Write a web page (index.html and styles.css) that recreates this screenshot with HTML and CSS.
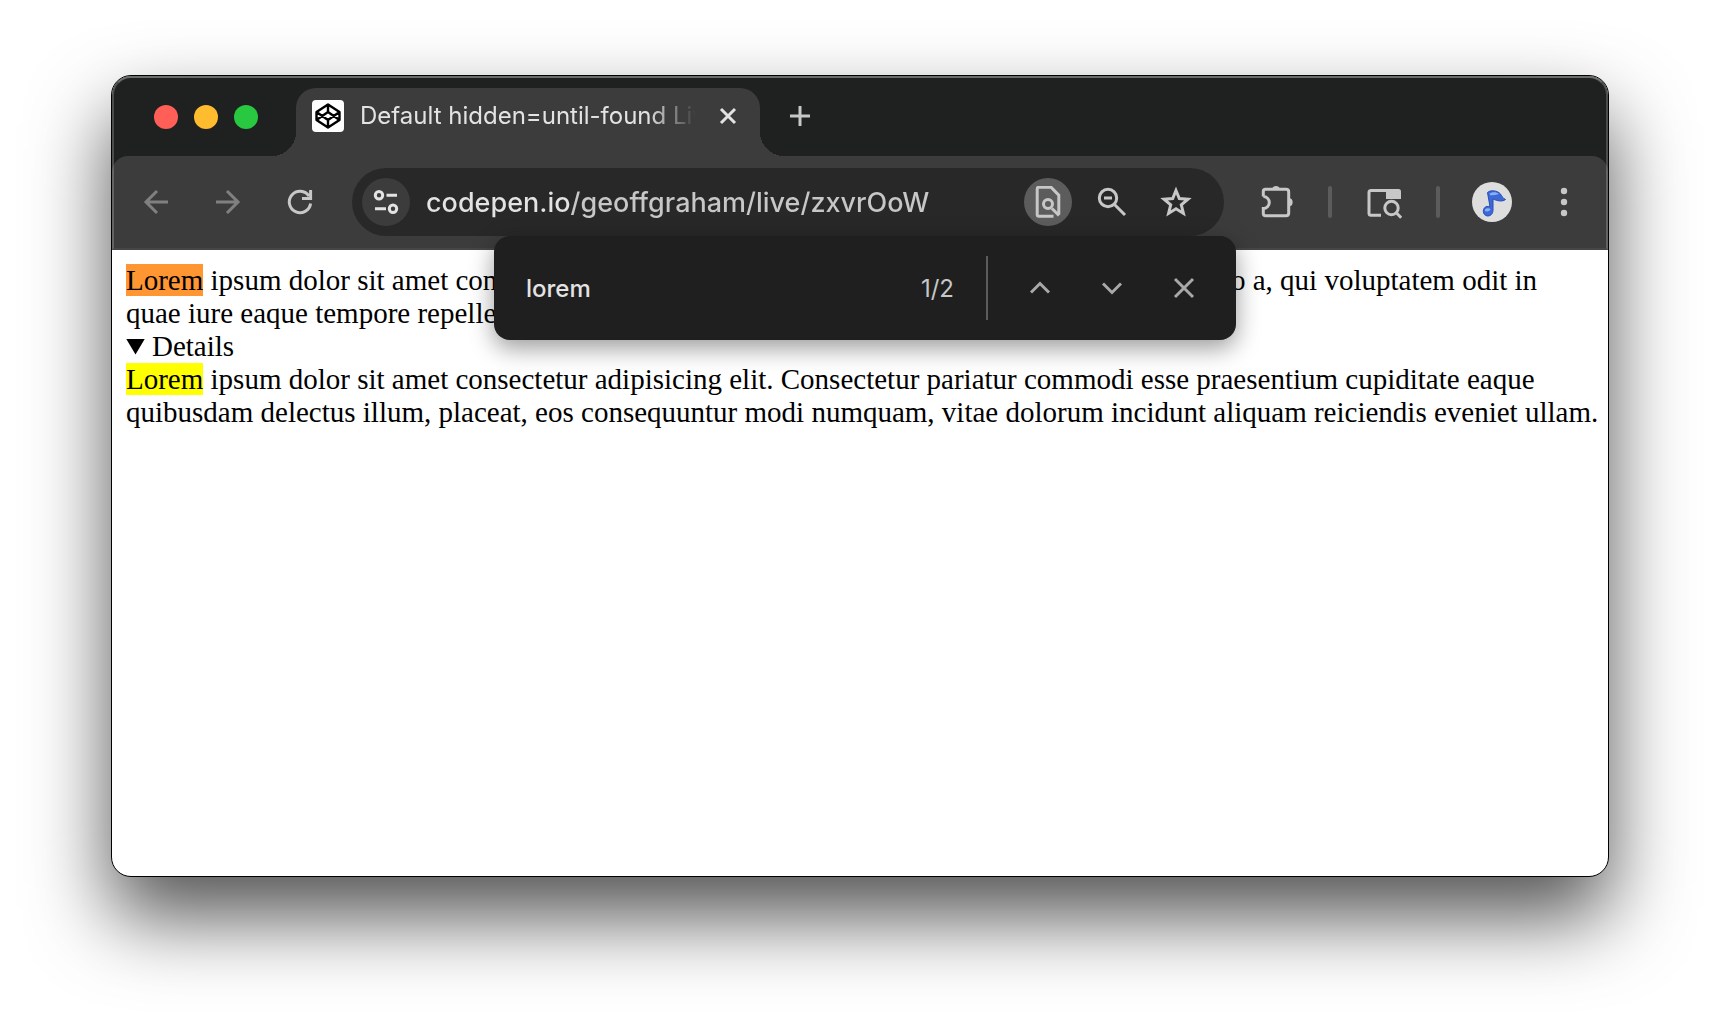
FILE: index.html
```html
<!DOCTYPE html>
<html lang="en">
<head>
<meta charset="utf-8">
<title>Default hidden=until-found Live</title>
<link rel="stylesheet" href="styles.css">
</head>
<body>
<div class="window">
  <header class="chrome">
    <div class="tab-strip">
      <div class="lights">
        <button class="light light-close" aria-label="Close window"></button>
        <button class="light light-min" aria-label="Minimize window"></button>
        <button class="light light-max" aria-label="Zoom window"></button>
      </div>
      <div class="tab">
        <svg class="favicon" viewBox="0 0 32 32" aria-hidden="true">
          <rect width="32" height="32" rx="4" fill="#fff" stroke="none"/>
          <path d="M16 4.500 27.500 12v8L16 27.500 4.500 20v-8zM16 4.500V12M16 20v7.500M4.500 12 16 20l11.500-8M4.500 20 16 12l11.500 8" fill="none" stroke="#000" stroke-width="2.400" stroke-linejoin="round"/>
        </svg>
        <span class="tab-title">Default hidden=until-found Live</span>
        <button class="tab-close" aria-label="Close tab">
          <svg width="24" height="24" viewBox="0 0 24 24"><path d="m5 5 14 14M19 5 5 19"/></svg>
        </button>
      </div>
      <button class="new-tab" aria-label="New tab">
        <svg width="24" height="24" viewBox="0 0 24 24"><path d="M12 2v20M2 12h20"/></svg>
      </button>
    </div>
    <div class="toolbar">
      <nav class="nav">
        <button class="tool dim" aria-label="Back">
          <svg width="32" height="32" viewBox="0 0 32 32"><path d="M28 16H6M17 5 6 16l11 11"/></svg>
        </button>
        <button class="tool dim" aria-label="Forward">
          <svg width="32" height="32" viewBox="0 0 32 32"><path d="M4 16h22M15 5l11 11-11 11"/></svg>
        </button>
        <button class="tool" aria-label="Reload">
          <svg width="32" height="32" viewBox="0 0 32 32"><path d="M26.600 17.500A10.700 10.700 0 1 1 25 10.200M26.600 4v8.600H18"/></svg>
        </button>
      </nav>
      <div class="omnibox">
        <button class="round site" aria-label="Site information">
          <svg width="32" height="32" viewBox="0 0 32 32"><circle cx="9" cy="9.300" r="3.700"/><path d="M16.500 9.300H27M5 22.700h11"/><circle cx="23" cy="22.700" r="3.700"/></svg>
        </button>
        <input class="url" type="text" aria-label="Address" value="codepen.io/geoffgraham/live/zxvrOoW">
        <div class="actions">
          <button class="round active" aria-label="Find in page">
            <svg width="32" height="32" viewBox="0 0 32 32"><path d="M21.500 30.200H7Q5.200 30.200 5.200 28.400V3Q5.200 1.200 7 1.200h12l7.800 8V28.500M20 22.500l7 7" /><circle cx="16" cy="18" r="4.500"/></svg>
          </button>
          <button class="round" aria-label="Zoom">
            <svg width="32" height="32" viewBox="0 0 32 32"><circle cx="12" cy="12" r="8.700"/><path d="m18.500 18.500 10.500 10.500M8 12h8"/></svg>
          </button>
          <button class="round" aria-label="Bookmark this tab">
            <svg width="32" height="32" viewBox="0 0 32 32"><path d="m16 4.500 3.300 8 8.700.700-6.700 5.700 2.100 8.500L16 22.800l-7.400 4.600 2.100-8.500L4 13.200l8.700-.700z"/></svg>
          </button>
        </div>
      </div>
      <div class="tools">
        <button class="tool" aria-label="Extensions">
          <svg width="36" height="36" viewBox="0 0 36 36"><path d="M5.300 12.500V7.500Q5.300 5.300 7.500 5.300H28Q30.700 5.300 30.700 8V29Q30.700 31.700 28 31.700H7.500Q5.300 31.700 5.300 29.500V24.500a6 6 0 0 0 0-12"/><path class="solid" d="M14 5a4.200 4.200 0 0 1 8 0zM31 14a4.300 4.300 0 0 1 0 8.500z"/></svg>
        </button>
        <span class="rule"></span>
        <button class="tool" aria-label="Search tabs">
          <svg width="36" height="36" viewBox="0 0 36 36"><path d="M15 31.200H5Q3 31.200 3 29.200V8.500Q3 6.500 5 6.500H33"/><path class="solid" d="M20 5h12.500Q35 5 35 7.500V15H20z"/><circle cx="25.500" cy="24" r="6.700"/><path d="m30 28.500 5.200 5.200"/></svg>
        </button>
        <span class="rule"></span>
        <button class="avatar" aria-label="Profile">
          <svg width="40" height="40" viewBox="0 0 40 40"><path class="note" d="M15.500 10.500C18 8 25 8 28.500 12c1.500 2.500 2.500 4.500 5 5.500-3 2.500-8 1.500-12.500-.500L21 28c0 4-2.500 6-5.500 6-5.500-.500-5.500-9-.500-9.500 1-.200 2-.200 3 .300z"/><path class="note-shine" d="M17.500 11.500c4-2 7-1.500 9.500.500-3 1-6 1.500-9 1.300zM13 27.500c1.500-1.700 4-1.700 5.500-.500 0 2-3.500 3-5.500 2z"/></svg>
        </button>
        <button class="tool" aria-label="Menu">
          <svg width="32" height="32" viewBox="0 0 32 32"><g class="solid"><circle cx="16" cy="5" r="3.200"/><circle cx="16" cy="16" r="3.200"/><circle cx="16" cy="27" r="3.200"/></g></svg>
        </button>
      </div>
    </div>
  </header>
  <form class="find" role="search">
    <input class="find-text" type="text" aria-label="Find in page" value="lorem">
    <span class="find-count">1/2</span>
    <span class="find-rule"></span>
    <div class="find-buttons">
      <button class="tool" type="button" aria-label="Previous match">
        <svg width="32" height="32" viewBox="0 0 32 32"><path d="m7 20.500 9-9 9 9"/></svg>
      </button>
      <button class="tool" type="button" aria-label="Next match">
        <svg width="32" height="32" viewBox="0 0 32 32"><path d="m7 11.500 9 9 9-9"/></svg>
      </button>
      <button class="tool" type="button" aria-label="Close find bar">
        <svg width="32" height="32" viewBox="0 0 32 32"><path d="m7 7 18 18M25 7 7 25"/></svg>
      </button>
    </div>
  </form>
  <main class="page">
    <div><mark class="current">Lorem</mark> ipsum dolor sit amet consectetur adipisicing elit. Ab quibusdam quo molestiae, explicabo a, qui voluptatem odit in quae&nbsp;iure eaque tempore repellendus.</div>
    <details open>
      <summary>Details</summary>
      <mark>Lorem</mark> ipsum dolor sit amet consectetur adipisicing elit. Consectetur pariatur commodi esse praesentium cupiditate eaque quibusdam delectus illum, placeat, eos consequuntur modi numquam, vitae dolorum incidunt aliquam reiciendis eveniet ullam.
    </details>
  </main>
</div>
</body>
</html>
```
FILE: styles.css
```css
* { box-sizing: border-box; }

body {
  margin: 0;
  min-height: 100vh;
  display: flex;
  padding: 75px 111px 147px;
  background: #fff;
  overflow: hidden;
  font-family: Inter, "Liberation Sans", sans-serif;
}

button {
  display: grid;
  place-items: center;
  flex: none;
  padding: 0;
  border: 0;
  background: none;
  color: #c7c7c7;
}

input {
  min-width: 0;
  padding: 0;
  border: 0;
  outline: 0;
  background: none;
  color: #e3e3e3;
  font-family: inherit;
}

svg {
  display: block;
  fill: none;
  stroke: currentColor;
  stroke-width: 3;
}

.solid { fill: currentColor; stroke: none; }

.window {
  position: relative;
  flex: 1;
  min-width: 0;
  border: 1px solid #000;
  border-radius: 20px;
  background: #fff;
  box-shadow: 0 40px 80px rgba(0, 0, 0, 0.68);
}

.chrome {
  position: relative;
  border-radius: 19px 19px 0 0;
  background: #1f2120;
  overflow: hidden;
}

/* light rim that follows the window's upper edge */
.chrome::after {
  content: "";
  position: absolute;
  inset: 0;
  border: 2px solid rgba(255, 255, 255, 0.2);
  border-top-color: rgba(255, 255, 255, 0.34);
  border-bottom-color: rgba(255, 255, 255, 0.06);
  border-radius: 19px 19px 0 0;
  pointer-events: none;
}

.tab-strip {
  display: flex;
  align-items: flex-end;
  height: 80px;
}

.lights {
  display: flex;
  align-items: center;
  gap: 16px;
  height: 78px;
  padding-left: 42px;
  margin-right: 38px;
}

.light { width: 24px; height: 24px; border-radius: 50%; }
.light-close { background: #ff5f57; }
.light-min { background: #febc2e; }
.light-max { background: #28c840; }

.tab {
  position: relative;
  display: flex;
  align-items: center;
  flex: 0 1 464px;
  min-width: 0;
  height: 68px;
  padding: 0 16px 12px;
  border-radius: 20px 20px 0 0;
  background: #3c3c3c;
}

/* concave feet joining the tab to the toolbar */
.tab::before,
.tab::after {
  content: "";
  position: absolute;
  bottom: 0;
  width: 24px;
  height: 24px;
}
.tab::before {
  right: 100%;
  background: radial-gradient(circle at 0 0, transparent 24px, #3c3c3c 24px);
}
.tab::after {
  left: 100%;
  background: radial-gradient(circle at 100% 0, transparent 24px, #3c3c3c 24px);
}

.favicon { flex: none; width: 32px; height: 32px; }

.tab-title {
  flex: 1;
  min-width: 0;
  margin: 0 16px;
  overflow: hidden;
  white-space: nowrap;
  color: #e3e3e3;
  font-size: 24px;
  line-height: 32px;
  -webkit-mask-image: linear-gradient(to left, transparent, #000 48px);
  mask-image: linear-gradient(to left, transparent, #000 48px);
}

.tab-close { width: 32px; height: 32px; color: #e3e3e3; }

.new-tab { width: 32px; height: 80px; margin-left: 24px; }

.toolbar {
  display: flex;
  align-items: center;
  height: 94px;
  padding: 0 24px 2px;
  border-radius: 16px 16px 0 0;
  background: #3c3c3c;
}

.tool { width: 40px; height: 40px; }
.dim { color: #808080; }

.nav { display: flex; gap: 32px; }

.omnibox {
  display: flex;
  align-items: center;
  flex: 1;
  min-width: 0;
  height: 68px;
  margin: 0 32px;
  padding: 0 24px 0 10px;
  border-radius: 34px;
  background: #282828;
}

.round { width: 48px; height: 48px; border-radius: 50%; }
.site { background: #3c3c3c; color: #e3e3e3; }
.active { background: #5c5c5c; }

.url {
  flex: 1;
  height: 40px;
  margin-left: 16px;
  font-size: 27px;
  font-weight: 500;
  /* domain is brighter than the path */
  background: linear-gradient(to right, #e3e3e3 146px, #c7c7c7 146px);
  -webkit-background-clip: text;
  background-clip: text;
  -webkit-text-fill-color: transparent;
}

.actions { display: flex; gap: 16px; }

.tools { display: flex; align-items: center; }
.rule { width: 4px; height: 32px; margin: 0 32px; border-radius: 2px; background: #5c5c5c; }
.avatar { width: 40px; height: 40px; margin-right: 32px; border-radius: 50%; background: #dedede; }
.note { fill: #3c68d8; stroke: #2d4db5; stroke-width: 1; }
.note-shine { fill: #86b0f8; stroke: none; }

.find {
  position: absolute;
  top: 160px;
  right: 372px;
  display: flex;
  align-items: center;
  width: 742px;
  height: 104px;
  padding: 0 32px;
  border-radius: 16px;
  background: #1f1f1f;
  box-shadow: 0 8px 24px rgba(0, 0, 0, 0.4);
}

.find-text { flex: 1; height: 40px; font-size: 24px; font-weight: 500; }
.find-count { color: #c7c7c7; font-size: 24px; }
.find-rule { width: 2px; height: 64px; margin: 0 32px; background: #5c5c5c; }
.find-buttons { display: flex; gap: 32px; }
.find-buttons .tool { color: #a8a8a8; }

.page {
  padding: 14px 8px 14px 14px;
  color: #000;
  font: 29px/33px "Liberation Serif", serif;
}

summary {
  display: flex;
  align-items: center;
  gap: 7px;
}
summary::before {
  content: "";
  width: 19px;
  height: 16px;
  background: currentColor;
  clip-path: polygon(0 0, 100% 0, 50% 100%);
}

mark { background: #ff0; color: #000; }
.current { background: #ff9632; }
```
